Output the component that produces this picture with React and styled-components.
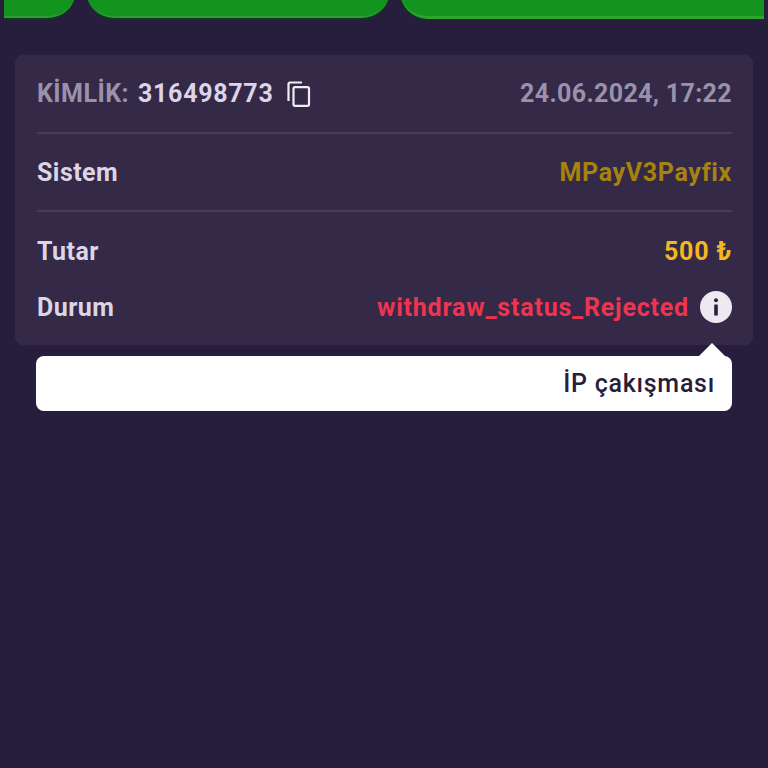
import React from 'react';
import styled, { createGlobalStyle } from 'styled-components';

const GlobalStyle = createGlobalStyle`
    html, body{
        margin:0;
        padding:0;
        background:#271e3d;
    }
    body{
        font-family:Roboto, "Liberation Sans", sans-serif;
    }
`;

const Page = styled.div`
    width:768px;
    height:768px;
    overflow:hidden;
    background:#271e3d;
`;

const Tabs = styled.div`
    display:flex;
    align-items:flex-end;
    height:20px;
    padding:0 4px;
    gap:10px;
    overflow:hidden;
`;

const Tab = styled.div`
    flex:${props => props.$grow} 0 0;
    height:${props => props.$active ? 50 : 49}px;
    margin-bottom:${props => props.$active ? 1 : 2}px;
    background:#12941f;
    border-bottom:${props => props.$active ? '3px solid #2ba52c' : '2px solid #2a9e2c'};
    box-sizing:border-box;
    border-radius:${props => props.$radius};
    box-shadow:0 2px 0 #143526;
`;

const Card = styled.section`
    margin:35px 15px 0;
    background:#342947;
    border-radius:8px;
    padding:0 21px 0 22px;
    height:290px;
    box-sizing:border-box;
`;

const Row = styled.div`
    display:flex;
    align-items:center;
    justify-content:space-between;
    height:${props => props.$height}px;
    box-sizing:border-box;
    font-size:25px;
    font-weight:700;
    letter-spacing:.45px;
    color:#dcd5e8;
    border-bottom:${props => props.$divider ? '2px solid #453c5a' : 'none'};
`;

const IdGroup = styled.div`
    display:flex;
    align-items:center;
`;

const IdLabel = styled.span`
    color:#9a92ab;
    margin-right:9px;
`;

const IdNumber = styled.span`
    letter-spacing:.7px;
`;

const CopyButton = styled.span`
    display:flex;
    margin-left:14px;
    color:#f0edf5;
`;

const DateText = styled.span`
    color:#9a92ab;
    letter-spacing:.35px;
`;

const Value = styled.span`
    color:${props => props.$color};
    letter-spacing:${props => props.$spacing}px;
`;

const StatusGroup = styled.div`
    display:flex;
    align-items:center;
    gap:11px;
`;

const InfoBadge = styled.span`
    width:32px;
    height:32px;
    border-radius:50%;
    background:#ece9f1;
    display:flex;
    align-items:center;
    justify-content:center;
    color:#2a2140;
`;

const Tooltip = styled.div`
    position:relative;
    margin:11px 36px 0 36px;
    height:55px;
    box-sizing:border-box;
    padding:0 17px;
    background:#fff;
    border-radius:8px;
    display:flex;
    align-items:center;
    justify-content:flex-end;
    font-size:25px;
    font-weight:500;
    letter-spacing:.75px;
    color:#271e3d;

    &::before{
        content:"";
        position:absolute;
        top:-13px;
        right:6px;
        width:0;
        height:0;
        border-left:14px solid transparent;
        border-right:14px solid transparent;
        border-bottom:14px solid #fff;
    }
`;

function CopyIcon(){
    return(
        <svg width="24" height="26" viewBox="0 0 24 26" fill="none" stroke="currentColor" strokeWidth="2.2">
            <path d="M15 1.5H3a1.5 1.5 0 0 0-1.5 1.5v17"/>
            <rect x="6.5" y="6.2" width="15.5" height="18.6" rx="1.5"/>
        </svg>
    );
}

function InfoIcon(){
    return(
        <svg width="8" height="18" viewBox="0 0 8 18" fill="currentColor">
            <circle cx="4" cy="2.2" r="2"/>
            <rect x="2.2" y="6.5" width="3.6" height="11" rx=".5"/>
        </svg>
    );
}

export default function App(){
    return(
        <Page>
            <GlobalStyle/>
            <Tabs>
                <Tab $grow={72} $radius="0 0 28px 0"/>
                <Tab $grow={304} $radius="0 0 28px 28px"/>
                <Tab $grow={364} $radius="0 0 0 28px" $active/>
            </Tabs>
            <Card>
                <Row $height={79} $divider>
                    <IdGroup>
                        <IdLabel>KİMLİK:</IdLabel>
                        <IdNumber>316498773</IdNumber>
                        <CopyButton><CopyIcon/></CopyButton>
                    </IdGroup>
                    <DateText>24.06.2024, 17:22</DateText>
                </Row>
                <Row $height={78} $divider>
                    <span>Sistem</span>
                    <Value $color="#a8820f" $spacing={.67}>MPayV3Payfix</Value>
                </Row>
                <Row $height={78}>
                    <span>Tutar</span>
                    <Value $color="#f5b71d" $spacing={.8}>500 ₺</Value>
                </Row>
                <Row $height={34}>
                    <span>Durum</span>
                    <StatusGroup>
                        <Value $color="#f0334f" $spacing={.8}>withdraw_status_Rejected</Value>
                        <InfoBadge><InfoIcon/></InfoBadge>
                    </StatusGroup>
                </Row>
            </Card>
            <Tooltip>İP çakışması</Tooltip>
        </Page>
    );
}
